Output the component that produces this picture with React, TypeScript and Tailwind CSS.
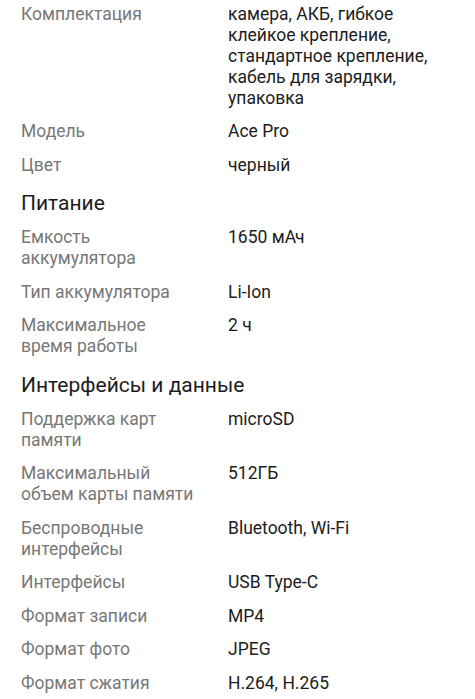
const sections: { title?: string; rows: [string, string][] }[] = [
  {
    rows: [
      [
        'Комплектация',
        'камера, АКБ, гибкое клейкое крепление, стандартное крепление, кабель для зарядки, упаковка',
      ],
      ['Модель', 'Ace Pro'],
      ['Цвет', 'черный'],
    ],
  },
  {
    title: 'Питание',
    rows: [
      ['Емкость аккумулятора', '1650 мАч'],
      ['Тип аккумулятора', 'Li-Ion'],
      ['Максимальное время работы', '2 ч'],
    ],
  },
  {
    title: 'Интерфейсы и данные',
    rows: [
      ['Поддержка карт памяти', 'microSD'],
      ['Максимальный объем карты памяти', '512ГБ'],
      ['Беспроводные интерфейсы', 'Bluetooth, Wi-Fi'],
      ['Интерфейсы', 'USB Type-C'],
      ['Формат записи', 'MP4'],
      ['Формат фото', 'JPEG'],
      ['Формат сжатия', 'H.264, H.265'],
    ],
  },
];

function SpecRow({ label, value }: { label: string; value: string }) {
  return (
    <div className="grid grid-cols-[207px_1fr] pb-[12.5px] text-[17.5px] leading-[21px]">
      <div className="pr-[32px] text-[#777777]">{label}</div>
      <div className="text-[#1c1c1c]">{value}</div>
    </div>
  );
}

export default function App() {
  return (
    <main className="min-h-screen bg-white px-[21px] pt-[3.5px] font-['Roboto',sans-serif]">
      {sections.map((section, i) => (
        <section key={i}>
          {section.title && (
            <h2 className="mt-[1px] mb-[10px] text-[21px] leading-[28px] text-[#1c1c1c]">
              {section.title}
            </h2>
          )}
          {section.rows.map(([label, value]) => (
            <SpecRow key={label} label={label} value={value} />
          ))}
        </section>
      ))}
    </main>
  );
}
